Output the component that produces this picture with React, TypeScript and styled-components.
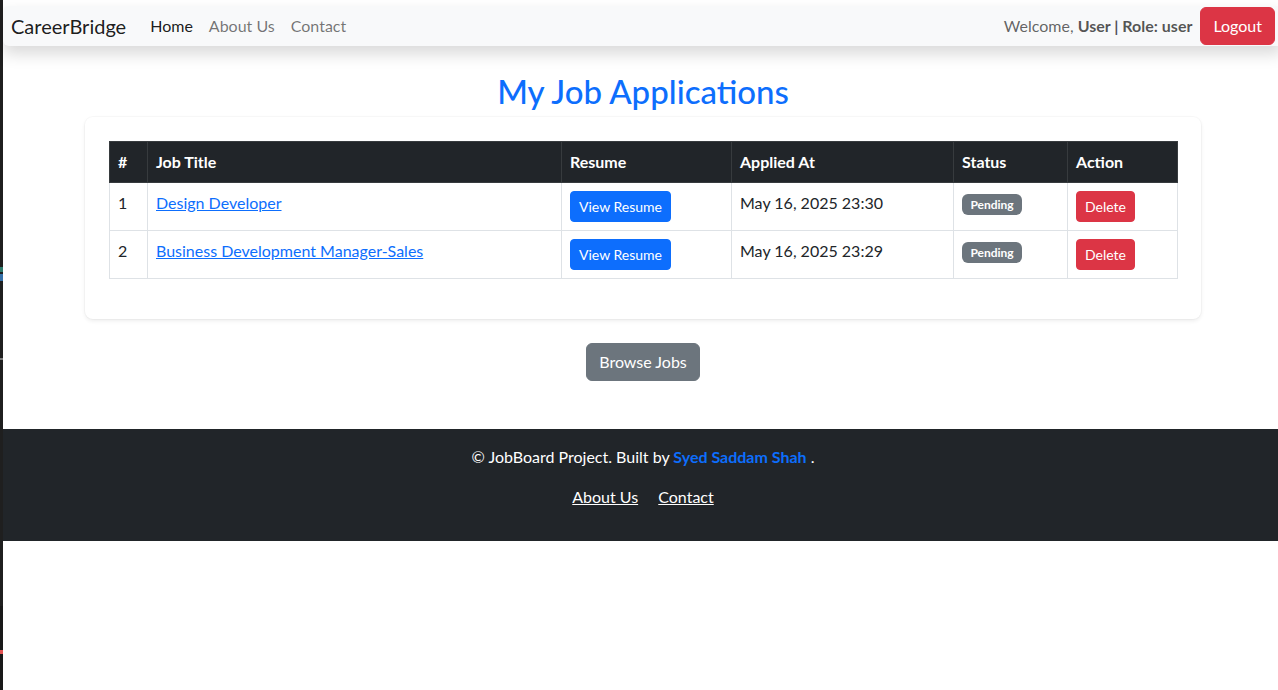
import React from "react";
import styled, { createGlobalStyle } from "styled-components";

const GlobalStyle = createGlobalStyle`
  *, *::before, *::after { box-sizing: border-box; }
  html, body {
    margin: 0;
    padding: 0;
    overflow: hidden;
    background: #ffffff;
  }
  body {
    font-family: Lato, "Liberation Sans", sans-serif;
    font-size: 16px;
    line-height: 1.5;
    color: #212529;
  }
`;

const Shell = styled.div`
  display: flex;
  min-height: 100vh;
`;

const Strip = styled.div`
  width: 3px;
  flex-shrink: 0;
  background: #1f1f1f;
  display: flex;
  flex-direction: column;
`;

const Mark = styled.div<{ $mt: number; $h: number; $c: string }>`
  margin-top: ${(p) => p.$mt}px;
  height: ${(p) => p.$h}px;
  background: ${(p) => p.$c};
  flex-shrink: 0;
`;

const StripTail = styled.div<{ $mt: number }>`
  margin-top: ${(p) => p.$mt}px;
  flex: 1;
  background: #181818;
  display: flex;
  flex-direction: column;
`;

const Page = styled.div`
  width: 1280px;
  flex-shrink: 0;
  background: #ffffff;
  display: flex;
  flex-direction: column;
`;

const Navbar = styled.nav`
  margin-top: 6px;
  height: 40px;
  background: #f8f9fa;
  border-radius: 6px;
  box-shadow: 0 0.5rem 1rem rgba(0, 0, 0, 0.15);
  padding: 0 8px;
  display: flex;
  align-items: center;
  position: relative;
  z-index: 1;
`;

const Brand = styled.a`
  font-size: 20px;
  line-height: 30px;
  padding: 5px 0;
  margin-right: 16px;
  color: rgba(0, 0, 0, 0.9);
  text-decoration: none;
`;

const NavList = styled.div`
  display: flex;
  align-items: center;
`;

const NavLink = styled.a<{ $active?: boolean }>`
  padding: 8px;
  font-size: 16px;
  line-height: 24px;
  color: ${(p) => (p.$active ? "rgba(0,0,0,0.9)" : "rgba(0,0,0,0.55)")};
  text-decoration: none;
`;

const NavRight = styled.div`
  margin-left: auto;
  display: flex;
  align-items: center;
`;

const NavText = styled.span`
  color: rgba(0, 0, 0, 0.62);
  margin-right: 8px;
  font-size: 16px;
  line-height: 24px;

  b {
    font-weight: 700;
    color: rgba(0, 0, 0, 0.68);
  }
`;

const Btn = styled.button<{ $bg: string; $sm?: boolean }>`
  display: inline-block;
  font-family: inherit;
  color: #ffffff;
  background: ${(p) => p.$bg};
  border: 1px solid ${(p) => p.$bg};
  border-radius: ${(p) => (p.$sm ? "4px" : "6px")};
  padding: ${(p) => (p.$sm ? "4px 8px" : "6px 12px")};
  font-size: ${(p) => (p.$sm ? "14px" : "16px")};
  line-height: 1.5;
  cursor: pointer;
  vertical-align: middle;
`;

const Container = styled.main`
  width: 1140px;
  margin: 25px auto 0;
  padding: 0 12px;
  text-align: center;
`;

const Title = styled.h2`
  margin: 1px 0 5px;
  font-size: 33px;
  font-weight: 500;
  line-height: 1.2;
  color: #0d6efd;
`;

const Card = styled.section`
  background: #ffffff;
  border-radius: 8px;
  padding: 24px;
  box-shadow: 0 0.125rem 0.25rem rgba(0, 0, 0, 0.075), 0 0 0 1px rgba(0, 0, 0, 0.025);
  text-align: left;
`;

const Table = styled.table`
  width: 100%;
  table-layout: fixed;
  border-collapse: collapse;
  margin-bottom: 16px;
  vertical-align: top;
`;

const Col = styled.col<{ $w: number }>`
  width: ${(p) => p.$w}px;
`;

const Th = styled.th`
  background: #212529;
  color: #ffffff;
  font-weight: 700;
  text-align: left;
  padding: 8px;
  border: 1px solid #373b3e;
  line-height: 24px;
  vertical-align: bottom;
`;

const Td = styled.td`
  padding: 8px;
  border: 1px solid #dee2e6;
  line-height: 24px;
  vertical-align: top;
  color: #212529;
`;

const JobLink = styled.a`
  color: #0d6efd;
  text-decoration: underline;
`;

const Badge = styled.span`
  display: inline-block;
  padding: 0.35em 0.7em;
  font-size: 12px;
  font-weight: 700;
  line-height: 1;
  color: #ffffff;
  background: #6c757d;
  border-radius: 6px;
  vertical-align: baseline;
`;

const BrowseWrap = styled.div`
  margin-top: 24px;
`;

const Footer = styled.footer`
  margin-top: 48px;
  background: #212529;
  color: #ffffff;
  text-align: center;
  padding: 16px 0;
`;

const FooterLine = styled.p`
  margin: 0 0 16px;
  line-height: 24px;
`;

const Author = styled.a`
  color: #0d6efd;
  font-weight: 700;
  text-decoration: none;
`;

const FooterLink = styled.a`
  color: #ffffff;
  text-decoration: underline;
  margin: 0 8px;
`;

const applications = [
  { id: 1, title: "Design Developer", applied: "May 16, 2025 23:30", status: "Pending" },
  { id: 2, title: "Business Development Manager-Sales", applied: "May 16, 2025 23:29", status: "Pending" },
];

export default function App() {
  return (
    <>
      <GlobalStyle />
      <Shell>
        <Strip>
          <Mark $mt={267} $h={5} $c="#2c7a6c" />
          <Mark $mt={2} $h={7} $c="#3570a8" />
          <Mark $mt={77} $h={2} $c="#7a7a7a" />
          <StripTail $mt={246}>
            <Mark $mt={44} $h={4} $c="#e35353" />
          </StripTail>
        </Strip>
        <Page>
          <Navbar>
            <Brand href="#">CareerBridge</Brand>
            <NavList>
              <NavLink href="#" $active>Home</NavLink>
              <NavLink href="#">About Us</NavLink>
              <NavLink href="#">Contact</NavLink>
            </NavList>
            <NavRight>
              <NavText>
                Welcome, <b>User | Role: user</b>
              </NavText>
              <Btn $bg="#dc3545">Logout</Btn>
            </NavRight>
          </Navbar>

          <Container>
            <Title>My Job Applications</Title>
            <Card>
              <Table>
                <colgroup>
                  <Col $w={38} />
                  <Col $w={414} />
                  <Col $w={170} />
                  <Col $w={222} />
                  <Col $w={114} />
                  <Col $w={110} />
                </colgroup>
                <thead>
                  <tr>
                    <Th>#</Th>
                    <Th>Job Title</Th>
                    <Th>Resume</Th>
                    <Th>Applied At</Th>
                    <Th>Status</Th>
                    <Th>Action</Th>
                  </tr>
                </thead>
                <tbody>
                  {applications.map((a) => (
                    <tr key={a.id}>
                      <Td>{a.id}</Td>
                      <Td>
                        <JobLink href="#">{a.title}</JobLink>
                      </Td>
                      <Td>
                        <Btn $bg="#0d6efd" $sm>View Resume</Btn>
                      </Td>
                      <Td>{a.applied}</Td>
                      <Td>
                        <Badge>{a.status}</Badge>
                      </Td>
                      <Td>
                        <Btn $bg="#dc3545" $sm>Delete</Btn>
                      </Td>
                    </tr>
                  ))}
                </tbody>
              </Table>
            </Card>
            <BrowseWrap>
              <Btn $bg="#6c757d">Browse Jobs</Btn>
            </BrowseWrap>
          </Container>

          <Footer>
            <FooterLine>
              © JobBoard Project. Built by <Author href="#">Syed Saddam Shah</Author> .
            </FooterLine>
            <FooterLine>
              <FooterLink href="#">About Us</FooterLink>{" "}
              <FooterLink href="#">Contact</FooterLink>
            </FooterLine>
          </Footer>
        </Page>
      </Shell>
    </>
  );
}
